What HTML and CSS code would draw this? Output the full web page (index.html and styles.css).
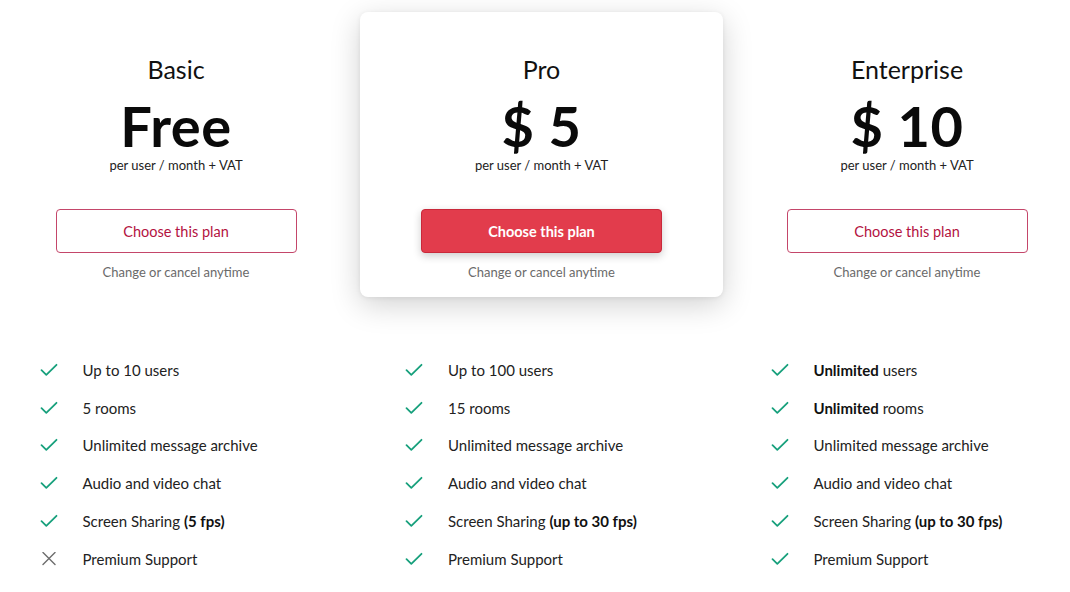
FILE: index.html
```html
<!DOCTYPE html>
<html lang="en">
<head>
<meta charset="utf-8">
<title>Pricing</title>
<link rel="stylesheet" href="styles.css">
</head>
<body>
<main class="pricing">
  <section class="plan">
    <div class="plan-head">
      <h2 class="plan-name">Basic</h2>
      <div class="price">Free</div>
      <div class="per">per user / month + VAT</div>
      <button class="btn btn-outline">Choose this plan</button>
      <div class="note">Change or cancel anytime</div>
    </div>
    <ul class="features">
      <li><span class="ic ok"><svg viewBox="0 0 18 14"><path d="M1.5 7.2 6.3 11.8 16.5 1.8"/></svg></span>Up to 10 users</li>
      <li><span class="ic ok"><svg viewBox="0 0 18 14"><path d="M1.5 7.2 6.3 11.8 16.5 1.8"/></svg></span>5 rooms</li>
      <li><span class="ic ok"><svg viewBox="0 0 18 14"><path d="M1.5 7.2 6.3 11.8 16.5 1.8"/></svg></span>Unlimited message archive</li>
      <li><span class="ic ok"><svg viewBox="0 0 18 14"><path d="M1.5 7.2 6.3 11.8 16.5 1.8"/></svg></span>Audio and video chat</li>
      <li><span class="ic ok"><svg viewBox="0 0 18 14"><path d="M1.5 7.2 6.3 11.8 16.5 1.8"/></svg></span>Screen Sharing&nbsp;<b>(5 fps)</b></li>
      <li><span class="ic no"><svg viewBox="0 0 18 14"><path d="M3 0.5 15 12.5M15 0.5 3 12.5"/></svg></span>Premium Support</li>
    </ul>
  </section>
  <section class="plan featured">
    <div class="plan-head card">
      <h2 class="plan-name">Pro</h2>
      <div class="price">$ 5</div>
      <div class="per">per user / month + VAT</div>
      <button class="btn btn-solid">Choose this plan</button>
      <div class="note">Change or cancel anytime</div>
    </div>
    <ul class="features">
      <li><span class="ic ok"><svg viewBox="0 0 18 14"><path d="M1.5 7.2 6.3 11.8 16.5 1.8"/></svg></span>Up to 100 users</li>
      <li><span class="ic ok"><svg viewBox="0 0 18 14"><path d="M1.5 7.2 6.3 11.8 16.5 1.8"/></svg></span>15 rooms</li>
      <li><span class="ic ok"><svg viewBox="0 0 18 14"><path d="M1.5 7.2 6.3 11.8 16.5 1.8"/></svg></span>Unlimited message archive</li>
      <li><span class="ic ok"><svg viewBox="0 0 18 14"><path d="M1.5 7.2 6.3 11.8 16.5 1.8"/></svg></span>Audio and video chat</li>
      <li><span class="ic ok"><svg viewBox="0 0 18 14"><path d="M1.5 7.2 6.3 11.8 16.5 1.8"/></svg></span>Screen Sharing&nbsp;<b>(up to 30 fps)</b></li>
      <li><span class="ic ok"><svg viewBox="0 0 18 14"><path d="M1.5 7.2 6.3 11.8 16.5 1.8"/></svg></span>Premium Support</li>
    </ul>
  </section>
  <section class="plan">
    <div class="plan-head">
      <h2 class="plan-name">Enterprise</h2>
      <div class="price">$ 10</div>
      <div class="per">per user / month + VAT</div>
      <button class="btn btn-outline">Choose this plan</button>
      <div class="note">Change or cancel anytime</div>
    </div>
    <ul class="features">
      <li><span class="ic ok"><svg viewBox="0 0 18 14"><path d="M1.5 7.2 6.3 11.8 16.5 1.8"/></svg></span><b>Unlimited</b>&nbsp;users</li>
      <li><span class="ic ok"><svg viewBox="0 0 18 14"><path d="M1.5 7.2 6.3 11.8 16.5 1.8"/></svg></span><b>Unlimited</b>&nbsp;rooms</li>
      <li><span class="ic ok"><svg viewBox="0 0 18 14"><path d="M1.5 7.2 6.3 11.8 16.5 1.8"/></svg></span>Unlimited message archive</li>
      <li><span class="ic ok"><svg viewBox="0 0 18 14"><path d="M1.5 7.2 6.3 11.8 16.5 1.8"/></svg></span>Audio and video chat</li>
      <li><span class="ic ok"><svg viewBox="0 0 18 14"><path d="M1.5 7.2 6.3 11.8 16.5 1.8"/></svg></span>Screen Sharing&nbsp;<b>(up to 30 fps)</b></li>
      <li><span class="ic ok"><svg viewBox="0 0 18 14"><path d="M1.5 7.2 6.3 11.8 16.5 1.8"/></svg></span>Premium Support</li>
    </ul>
  </section>
</main>
</body>
</html>
```

FILE: styles.css
```css
* { box-sizing: border-box; }

html, body {
  margin: 0;
  padding: 0;
  background: #ffffff;
}

body {
  font-family: "Lato", "Noto Sans", "Liberation Sans", sans-serif;
  color: #1c1c1c;
  width: 1070px;
  height: 592px;
  overflow: hidden;
}

.pricing {
  display: grid;
  grid-template-columns: repeat(3, 363px);
  column-gap: 2.5px;
  margin-left: -5.5px;
  padding-top: 12px;
}

.plan {
  display: flex;
  flex-direction: column;
}

.plan-head {
  display: flex;
  flex-direction: column;
  align-items: center;
  height: 285px;
  padding-top: 42px;
}

.card {
  background: #fff;
  border-radius: 8px;
  box-shadow: 0 8px 30px rgba(0, 0, 0, 0.18), 0 1px 5px rgba(0, 0, 0, 0.07);
}

.plan-name {
  margin: 0;
  font-size: 25px;
  font-weight: 400;
  line-height: 30px;
  color: #111;
}

.price {
  margin-top: 12px;
  font-size: 56px;
  font-weight: 700;
  line-height: 60px;
  color: #0a0a0a;
  letter-spacing: 0.5px;
}

.per {
  font-size: 13px;
  line-height: 16px;
  margin-top: 1px;
  color: #222;
}

.btn {
  margin-top: 36px;
  width: 241px;
  height: 44px;
  border-radius: 4px;
  font-family: inherit;
  font-size: 14.5px;
  cursor: pointer;
}

.btn-outline {
  background: #fff;
  border: 1px solid #c4466a;
  color: #b3123f;
}

.btn-solid {
  background: #e23c4c;
  border: 1px solid #c9283a;
  color: #fff;
  font-weight: 700;
  box-shadow: 0 3px 8px rgba(0, 0, 0, 0.2);
}

.note {
  margin-top: 11px;
  font-size: 13px;
  line-height: 16px;
  color: #6a6a6a;
}

.features {
  list-style: none;
  margin: 54px 0 0;
  padding: 0 0 0 45px;
}

.features li {
  display: flex;
  align-items: center;
  height: 37.8px;
  font-size: 15px;
  color: #222;
}

.features b {
  font-weight: 700;
  color: #111;
}

.ic {
  width: 43px;
  flex: none;
  display: flex;
  align-items: center;
}

.ic svg {
  width: 18px;
  height: 14px;
  fill: none;
  stroke-width: 1.8;
  stroke-linecap: round;
  stroke-linejoin: round;
}

.ok svg { stroke: #17a07c; }
.no svg { stroke: #6d6d6d; stroke-width: 1.4; }
```
